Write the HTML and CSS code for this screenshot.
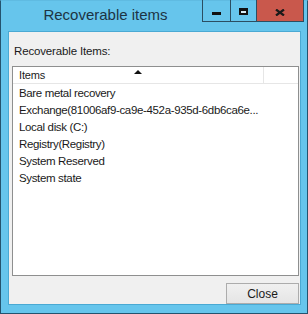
FILE: index.html
```html
<!DOCTYPE html>
<html>
<head>
<meta charset="utf-8">
<link rel="stylesheet" href="styles.css">
</head>
<body>
<div class="window">
  <div class="titlebar">
    <div class="title">Recoverable items</div>
    <div class="caption-buttons">
      <div class="cbtn min"><span class="min-glyph"></span></div>
      <div class="cbtn max"><span class="max-glyph"></span></div>
      <div class="cbtn close"><svg width="10" height="7" viewBox="0 0 10 7"><path d="M1 0.5 L9 6.5 M9 0.5 L1 6.5" stroke="#1a1a1a" stroke-width="2.2"/></svg></div>
    </div>
  </div>
  <div class="client">
    <div class="label">Recoverable Items:</div>
    <div class="listbox">
      <div class="header">
        <div class="hcol first">Items<span class="sort"></span></div>
        <div class="hcol rest"></div>
      </div>
      <div class="rows">
        <div class="row">Bare metal recovery</div>
        <div class="row">Exchange(81006af9-ca9e-452a-935d-6db6ca6e...</div>
        <div class="row">Local disk (C:)</div>
        <div class="row">Registry(Registry)</div>
        <div class="row">System Reserved</div>
        <div class="row">System state</div>
      </div>
    </div>
    <div class="footer">
      <button class="btn">Close</button>
    </div>
  </div>
</div>
</body>
</html>
```
FILE: styles.css
```css
* { box-sizing: border-box; }
html, body { margin: 0; padding: 0; }
body { width: 308px; height: 314px; overflow: hidden; background: #fff; }
.window {
  width: 308px; height: 314px;
  background: #66c5ec;
  border: 1px solid #24536e;
  border-top-color: #5fbbe2;
  display: flex; flex-direction: column;
  font-family: "Liberation Sans", Arial, sans-serif;
}
.titlebar { height: 30px; display: flex; align-items: flex-start; }
.title {
  flex: 1; text-align: center; padding-top: 5px; padding-left: 8px;
  font-size: 15px; color: #1d3444;
}
.caption-buttons { display: flex; height: 22px; margin-top: -1px; margin-right: 3px; }
.cbtn {
  height: 22px; display: flex; align-items: center; justify-content: center;
  border-left: 1px solid #2b4e62; border-bottom: 1px solid #2b4e62;
}
.cbtn.min { width: 28px; }
.cbtn.max { width: 26px; }
.cbtn.close { width: 48px; background: #c9584c; border-right: 1px solid #2b4e62; }
.min-glyph { width: 9px; height: 3px; background: #111; margin-top: 5px; }
.max-glyph { width: 9px; height: 7px; border: 2px solid #111; border-top-width: 3px; background: #d8eef7; margin-top: 2px; }
.cbtn.close svg { margin-top: 3px; }
.client {
  flex: 1; margin: 0 6px 8px 7px;
  background: #f0f0f0;
  border: 1px solid #4aa9d3;
  padding: 0 1px 0 3px;
  display: flex; flex-direction: column;
  font-size: 11px; letter-spacing: -0.15px; color: #1a1a1a;
}
.label { height: 34px; padding-top: 13px; padding-left: 2px; font-size: 11.5px; }
.listbox {
  height: 210px; background: #fff; border: 1px solid #8e8f8f;
  display: flex; flex-direction: column;
}
.header { height: 17px; display: flex; border-bottom: 1px solid #e6e6e6; }
.hcol { height: 16px; line-height: 16px; position: relative; }
.hcol.first { width: 251px; padding-left: 6px; border-right: 1px solid #e6e6e6; }
.hcol.rest { flex: 1; }
.sort {
  position: absolute; left: 121px; top: 3px;
  width: 0; height: 0;
  border-left: 4px solid transparent; border-right: 4px solid transparent;
  border-bottom: 4px solid #111;
}
.rows { padding-top: 1px; }
.row { height: 17px; line-height: 17px; padding-left: 6px; white-space: nowrap; font-size: 11.5px; letter-spacing: -0.35px; }
.footer { display: flex; justify-content: flex-end; padding-top: 7px; }
.btn {
  width: 73px; height: 21px; margin: 0;
  border: 1px solid #acacac;
  background: linear-gradient(#f0f0f0, #e5e5e5);
  font-family: "Liberation Sans", Arial, sans-serif; font-size: 12px; color: #1a1a1a;
  padding: 0;
}
```
